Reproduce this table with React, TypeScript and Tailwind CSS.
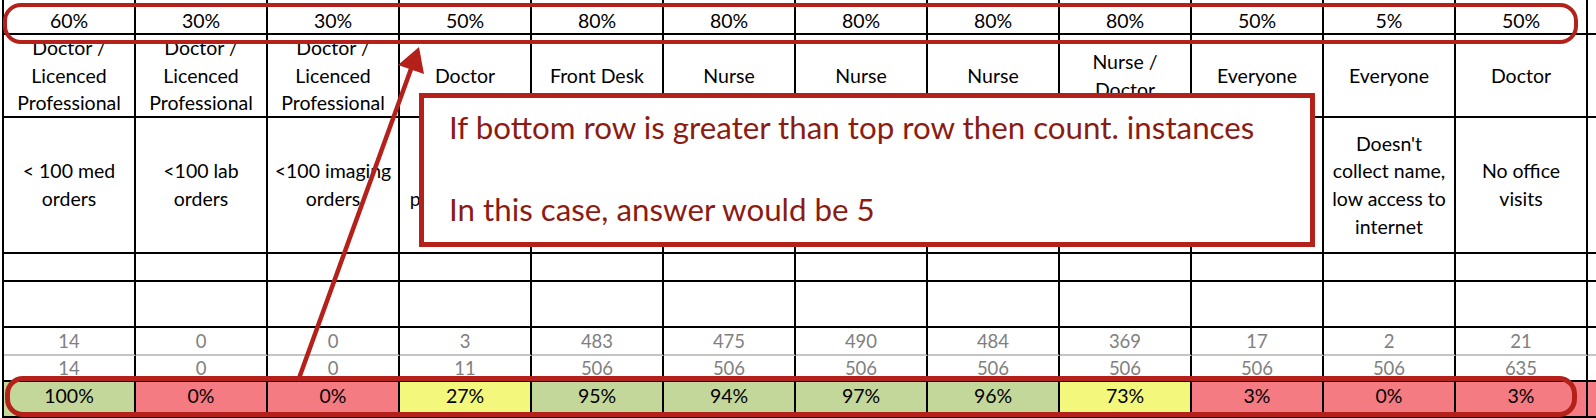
import React from "react";

type Tone = "green" | "red" | "yellow";

type Col = {
  goal: string;
  role: string[];
  desc: string[];
  actual: string;
  total: string;
  pct: string;
  tone: Tone;
};

// measure text for the middle columns sits under the note box, so only the edges show
const cols: Col[] = [
  { goal: "60%", role: ["Doctor /", "Licenced", "Professional"], desc: ["< 100 med", "orders"], actual: "14", total: "14", pct: "100%", tone: "green" },
  { goal: "30%", role: ["Doctor /", "Licenced", "Professional"], desc: ["<100 lab", "orders"], actual: "0", total: "0", pct: "0%", tone: "red" },
  { goal: "30%", role: ["Doctor /", "Licenced", "Professional"], desc: ["<100 imaging", "orders"], actual: "0", total: "0", pct: "0%", tone: "red" },
  { goal: "50%", role: ["Doctor"], desc: ["", "prescriptions"], actual: "3", total: "11", pct: "27%", tone: "yellow" },
  { goal: "80%", role: ["Front Desk"], desc: [], actual: "483", total: "506", pct: "95%", tone: "green" },
  { goal: "80%", role: ["Nurse"], desc: [], actual: "475", total: "506", pct: "94%", tone: "green" },
  { goal: "80%", role: ["Nurse"], desc: [], actual: "490", total: "506", pct: "97%", tone: "green" },
  { goal: "80%", role: ["Nurse"], desc: [], actual: "484", total: "506", pct: "96%", tone: "green" },
  { goal: "80%", role: ["Nurse /", "Doctor"], desc: [], actual: "369", total: "506", pct: "73%", tone: "yellow" },
  { goal: "50%", role: ["Everyone"], desc: ["", "access given"], actual: "17", total: "506", pct: "3%", tone: "red" },
  { goal: "5%", role: ["Everyone"], desc: ["Doesn't", "collect name,", "low access to", "internet"], actual: "2", total: "506", pct: "0%", tone: "red" },
  { goal: "50%", role: ["Doctor"], desc: ["No office", "visits"], actual: "21", total: "635", pct: "3%", tone: "red" },
];

const toneBg: Record<Tone, string> = {
  green: "bg-[#c4d79b]",
  red: "bg-[#f47b82]",
  yellow: "bg-[#f3f77b]",
};

const cell = "w-[132px] shrink-0 border-r-2 border-b-2 border-black flex flex-col justify-center text-center";
const tail = "w-[8px] shrink-0 border-b-2 border-black";

export default function App() {
  return (
    <div className="relative w-[1596px] h-[418px] overflow-hidden bg-white text-black font-['Lato',sans-serif]">
      <div className="pl-[2px]">
        <div className="border-l-2 border-black">
          {/* goal row */}
          <div className="flex h-[35px]">
            {cols.map((c, i) => (
              <div key={i} className={`${cell} justify-end pb-[1px] text-[19.5px] leading-[22px]`}>
                {c.goal}
              </div>
            ))}
            <div className={tail} />
          </div>

          {/* role row */}
          <div className="flex h-[83px]">
            {cols.map((c, i) => (
              <div key={i} className={`${cell} overflow-hidden text-[19.5px] leading-[27.5px]`}>
                {c.role.map((l, j) => (
                  <div key={j} className="whitespace-nowrap">{l}</div>
                ))}
              </div>
            ))}
            <div className={tail} />
          </div>

          {/* measure row */}
          <div className="flex h-[136px]">
            {cols.map((c, i) => (
              <div key={i} className={`${cell} text-[19.5px] leading-[27.7px]`}>
                {c.desc.map((l, j) => (
                  <div key={j} className="whitespace-nowrap h-[27.7px]">{l}</div>
                ))}
              </div>
            ))}
            <div className={tail} />
          </div>

          {/* empty rows */}
          <div className="flex h-[28px]">
            {cols.map((_, i) => (
              <div key={i} className={cell} />
            ))}
            <div className={tail} />
          </div>
          <div className="flex h-[46px]">
            {cols.map((_, i) => (
              <div key={i} className={cell} />
            ))}
            <div className={tail} />
          </div>

          {/* numerator */}
          <div className="flex h-[28px]">
            {cols.map((c, i) => (
              <div key={i} className={`${cell} border-b-[#c4c4c4] text-[18.5px] leading-[22px] text-[#7f7f7f]`}>
                {c.actual}
              </div>
            ))}
            <div className="w-[8px] shrink-0 border-b-2 border-[#c4c4c4]" />
          </div>

          {/* denominator */}
          <div className="flex h-[26px]">
            {cols.map((c, i) => (
              <div key={i} className={`${cell} text-[18.5px] leading-[22px] text-[#7f7f7f]`}>
                {c.total}
              </div>
            ))}
            <div className={tail} />
          </div>

          {/* result */}
          <div className="flex h-[36px]">
            {cols.map((c, i) => (
              <div key={i} className={`${cell} ${toneBg[c.tone]} pb-[6px] text-[19.5px] leading-[22px]`}>
                {c.pct}
              </div>
            ))}
            <div className={`${tail} bg-[#f47b82]`} />
          </div>
        </div>
      </div>

      {/* annotations */}
      <div className="absolute left-[3px] top-[3px] w-[1575px] h-[41px] rounded-[18px] border-4 border-[#b3211a]" />
      <div className="absolute left-[5px] top-[376px] w-[1572px] h-[41px] rounded-[18px] border-[5px] border-[#b3211a]" />

      <svg className="absolute inset-0" width="1596" height="418" viewBox="0 0 1596 418">
        <line x1="298" y1="381" x2="411" y2="69" stroke="#b3211a" strokeWidth="4.5" />
        <polygon points="419,47 398,65 424,74" fill="#b3211a" />
      </svg>

      <div className="absolute left-[419px] top-[93px] w-[896px] h-[154px] border-[5px] border-[#b3211a] bg-white pl-[25px] pt-[9px] text-[31.3px] leading-[41px] text-[#8c1c13] font-['Lato',sans-serif]">
        <div className="whitespace-nowrap">If bottom row is greater than top row then count. instances</div>
        <div className="h-[41px]" />
        <div className="whitespace-nowrap">In this case, answer would be 5</div>
      </div>
    </div>
  );
}
